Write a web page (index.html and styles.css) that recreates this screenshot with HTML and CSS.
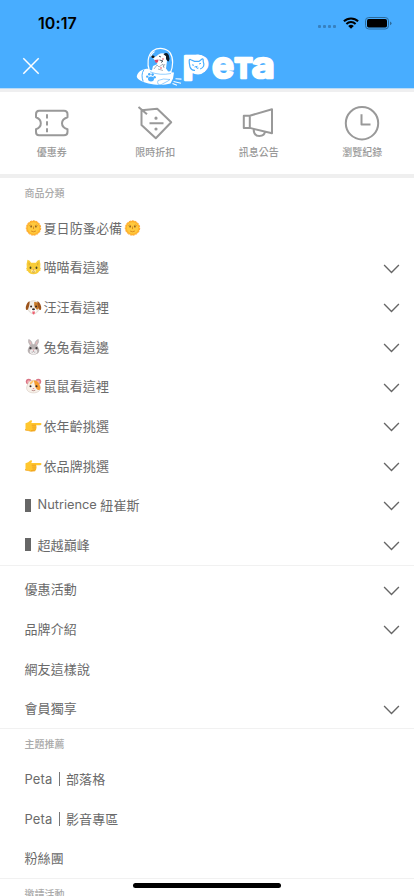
FILE: index.html
```html
<!DOCTYPE html>
<html lang="zh-Hant">
<head>
<meta charset="utf-8">
<meta name="viewport" content="width=device-width, initial-scale=1">
<title>Peta</title>
<link rel="stylesheet" href="styles.css">
</head>
<body>
<svg class="defs" width="0" height="0" aria-hidden="true">
  <symbol id="chevron" viewBox="0 0 16 10"><path d="M.6 1 8 8.5 15.4 1" fill="none" stroke="#666" stroke-width="1.35"/></symbol>
  <symbol id="sun" viewBox="0 0 16 16">
    <circle cx="8" cy="8" r="7.2" fill="#ffb52b" stroke="#ffa52d" stroke-width="1" stroke-dasharray="2 1"/>
    <circle cx="8" cy="8" r="5.7" fill="#ffc93e"/>
    <path d="M3.9 5.7q1.4-1.2 2.7 0M9.4 5.7q1.3-1.2 2.7 0" fill="none" stroke="#bf7417" stroke-width=".7"/>
    <circle cx="5.6" cy="6.8" r=".8" fill="#65401c"/><circle cx="10.4" cy="6.8" r=".8" fill="#65401c"/>
    <path d="M8 6.5v2.6M5.6 11q2.4 1.5 4.8 0" fill="none" stroke="#d27c16" stroke-width=".8"/>
  </symbol>
  <symbol id="cat" viewBox="0 0 16 16">
    <path d="M2 .8Q4.500 1.500 5.600 3.800h4.800Q11.500 1.500 14 .8q1.300 3.800.7 7.600l.8 1.700-.8.2.3 1.500-1.200.3Q12 15.300 8 15.300t-5.800-3.200L1 11.800l.3-1.500-.8-.2.8-1.700Q.7 4.600 2 .8z" fill="#f8cc38"/>
    <path d="M3 3l1.600 2-1.200 2zM13 3l-1.600 2 1.200 2z" fill="#e0ad2b"/>
    <ellipse cx="5" cy="8.800" rx=".9" ry="1.300" fill="#4c4823"/><ellipse cx="11" cy="8.800" rx=".9" ry="1.300" fill="#4c4823"/>
    <ellipse cx="8" cy="12" rx="2.700" ry="1.700" fill="#ffe98c"/><path d="M7 10.600h2L8 11.800z" fill="#c45c5d"/><path d="M6.600 12.800q1.400.8 2.800 0" fill="none" stroke="#96651c" stroke-width=".6"/>
  </symbol>
  <symbol id="dog" viewBox="0 0 16 16">
    <ellipse cx="8" cy="8.200" rx="5.800" ry="6.600" fill="#f1ede7" stroke="#cbbdb0" stroke-width=".4"/>
    <path d="M8.700 3q4-.5 4.800 3.700.3 3.600-2.100 4-3.100-1-2.700-7.700z" fill="#c77a28"/>
    <path d="M4.200 2.300Q1.800 2.600.4 7.400q-.6 3.700 1.500 3.600Q3.900 8.400 4.200 2.300zM11.800 2.300q2.400.3 3.800 5.100.6 3.700-1.500 3.600-2-2.600-2.300-8.700z" fill="#9c531b"/>
    <circle cx="5.600" cy="7.500" r="1" fill="#38271e"/><circle cx="10.600" cy="7.500" r="1" fill="#38271e"/>
    <ellipse cx="8" cy="11.300" rx="3" ry="2.300" fill="#fff"/><ellipse cx="8" cy="10.200" rx="1.500" ry="1" fill="#332c2b"/><path d="M6.700 12.600h2.800q-.1 2.800-1.400 2.800t-1.400-2.800z" fill="#ee5e70"/>
  </symbol>
  <symbol id="rabbit" viewBox="0 0 16 16">
    <path d="M5.200 7Q2 3.300 3.200.4 6.400 1.200 7 6.200M10.800 7Q14 3.300 12.800.4 9.600 1.200 9 6.200" fill="#c5bdbd" stroke="#aaa1a2" stroke-width=".5"/>
    <path d="M5.400 5.400Q4 3.700 4.100 2.100q1.400 1 1.800 3.300zM10.600 5.400Q12 3.700 11.900 2.100q-1.400 1-1.800 3.300z" fill="#f0b9bc"/>
    <path d="M8 5.200c4 0 4.500 2.400 5.800 5.700C14 14.500 10.500 15.500 8 15.500s-6-1-5.800-4.600C3.500 7.600 4 5.200 8 5.200z" fill="#b9b2b2"/>
    <circle cx="5" cy="9.200" r="1.100" fill="#413b3d"/><circle cx="11" cy="9.200" r="1.100" fill="#413b3d"/>
    <ellipse cx="8" cy="12.700" rx="3.700" ry="2.400" fill="#efecec"/><path d="M7 10.800h2l-1 1z" fill="#d76778"/><path d="M6.200 13q.9.8 1.800-.7.900 1.500 1.800.7" fill="none" stroke="#8a7e80" stroke-width=".6"/>
  </symbol>
  <symbol id="hamster" viewBox="0 0 16 16">
    <circle cx="3.200" cy="3.600" r="2.900" fill="#d97585"/><circle cx="12.800" cy="3.600" r="2.900" fill="#d97585"/><circle cx="3.300" cy="3.800" r="1.600" fill="#f6b0b6"/><circle cx="12.700" cy="3.800" r="1.600" fill="#f6b0b6"/>
    <path d="M8 2.300c4 0 5.800 2.300 6.800 6.700.8 4-3.200 5.900-6.800 5.900S.4 13 1.200 9C2.200 4.600 4 2.300 8 2.300z" fill="#f7f1e9" stroke="#cfbfb5" stroke-width=".5"/>
    <path d="M8.300 2.400c4 0 5.700 2.700 6.500 6.600.4 2.600-1.100 3.500-2.200 2.900C10 11 9.500 7.500 8.300 2.400z" fill="#f59b31"/><path d="M7 2.400Q4 4 4.200 6.500 7 6 8.300 2.400z" fill="#ffc265"/>
    <circle cx="5" cy="8.300" r="1" fill="#3a2924"/><circle cx="11" cy="8.300" r="1" fill="#3a2924"/><path d="M7 10.200h2l-1 1.100z" fill="#dd536b"/><path d="M6.200 12.200q1.800 1 3.600 0" fill="none" stroke="#a06361" stroke-width=".7"/>
  </symbol>
  <symbol id="hand" viewBox="0 0 17 16">
    <path d="M.5 5.300Q3.500 4.500 5.300 2.500q1.900-.5 1.700.8L6.300 4.900l9 .1q1.200.1 1.200 1.100t-1.200 1.200H11q1 .8.300 1.800.8 1-.2 1.900.4 1.200-.8 1.600Q5 14 3.100 12.500L.5 12.200z" fill="#ffc62d"/>
    <path d="M11 7.200H6.800M11.200 9.100H7.200M11 11H7.500M10.200 12.700H6" fill="none" stroke="#e89418" stroke-width=".7"/><path d="M.5 11v1.200l2.600.3q1.900 1.400 7.100.2" fill="none" stroke="#f2a51c" stroke-width=".7"/>
  </symbol>
</svg>

<div class="screen">
  <header class="top">
    <div class="status">
      <span class="time">10:17</span>
      <span class="signals">
        <span class="dots"><i></i><i></i><i></i><i></i></span>
        <svg class="wifi" viewBox="0 0 16 12"><path d="M.9 4.300a10.200 10.200 0 0 1 14.200 0M3.400 6.900a6.700 6.700 0 0 1 9.200 0" fill="none" stroke="#000" stroke-width="2"/><path d="M5.200 9a4.200 4.200 0 0 1 5.600 0L8 11.800z"/></svg>
        <svg class="battery" viewBox="0 0 27 13"><rect x=".5" y=".5" width="23" height="11.500" rx="3.300" fill="none" stroke="#2c6a9b" stroke-width="1"/><rect x="2" y="2" width="20" height="8.500" rx="1.700"/><path d="M25 4.400q1.500.5 1.500 1.900T25 8.200z" fill="#2c6a9b"/></svg>
      </span>
    </div>
    <div class="nav">
      <svg class="close" viewBox="0 0 18 18"><path d="M1.300 1.300l15.400 15.400M16.700 1.300L1.300 16.700" stroke="#fff" stroke-width="1.500"/></svg>
      <svg class="logo" viewBox="0 0 140 40" role="img" aria-label="Peta">
        <path d="M.8 29C2.500 23 9 20.800 16 22l13 3 9 .5-1 6-2.500 5C25 39 10 37.500 3.500 33 1.500 31.500.6 30.500.8 29z" fill="#fff"/>
        <path d="M7.800 22.800q-3.200 4.800-.6 11.700" fill="none" stroke="#48adff" stroke-width="1"/>
        <path d="M13.500 24C10.800 17.500 11.500 8 17 3.800c5.500-3.900 13.500-2.700 17 1.800 3.800 5.500 3 14.500.5 19.900z" fill="#48adff" stroke="#fff" stroke-width="1.200"/>
        <path d="M14.500 9.500q1-3.300 4-5" fill="none" stroke="#fff" stroke-width="1.300"/>
        <path d="M16.500 10.300q4-.3 6-2.800 4-2.500 7.500.3l1 6.200-1 7.500 2.500 3.500H15.500l1.500-6 4.500-2-2.500-3.200z" fill="#fff"/>
        <path d="M27.500 7.300q3.500-2.800 5.300 1 1.500 3.500-.2 6.300-3.100-1.100-2.600-5.300z" fill="#111c27"/>
        <ellipse cx="17" cy="9.700" rx="1.600" ry="1.200" fill="#111"/><path d="M23 9.200l2 .8M23.500 13l3.500 1-2 1.500" stroke="#253440" stroke-width=".8" fill="none"/><path d="M18.500 12.900l4-.5q-.3 3.800-2.800 3.300z" fill="#db4565"/><circle cx="27" cy="12" r="1" fill="#ee8c9b"/>
        <path d="M18 22l3-4 2 2 4-3 1 4M22 22l5 1.500M29 17l-2 3" stroke="#738291" stroke-width=".6" fill="none"/><circle cx="25" cy="21" r=".9" fill="#ef8790"/>
        <path d="M13 23.300q11 5 22.500 1.500" fill="none" stroke="#fff" stroke-width="1.500"/>
        <path d="M14 24.800q10 4 21 1.700" fill="none" stroke="#48adff" stroke-width=".6"/>
        <g fill="#48adff"><ellipse cx="15" cy="32" rx="3" ry="2.400"/><circle cx="11.200" cy="29.600" r="1.200"/><circle cx="13.300" cy="27.300" r="1.300"/><circle cx="16.600" cy="27.600" r="1.300"/><circle cx="18.600" cy="30.200" r="1.200"/></g>
        <path d="M22 33.500q5-2.500 12-1l-2 1.500-7 3.700q-4.500.5-3-4.200z" fill="#fff" stroke="#48adff" stroke-width=".6"/>
        <path d="M39.500 31.800l6 .3M37.500 34.500l7.500 1.800M36.500 36.500l4.500 1.800" stroke="#fff" stroke-width="1.100"/>
        <g class="wordmark">
          <text x="46.500" y="32.500" font-size="33" textLength="26" lengthAdjust="spacingAndGlyphs">P</text>
          <text x="76" y="31.300" font-size="37" textLength="22" lengthAdjust="spacingAndGlyphs">e</text>
          <text x="99" y="31.300" font-size="37" textLength="17" lengthAdjust="spacingAndGlyphs">т</text>
          <text x="115.800" y="31.300" font-size="37" textLength="23" lengthAdjust="spacingAndGlyphs">a</text>
        </g>
        <ellipse cx="62" cy="17.500" rx="9.800" ry="10" fill="#fff"/>
        <path d="M54 20q-2-9 .8-7.300l3.700 1.700h4.500L66 12q1.500-.8 1.200 2.500 2.300 5.500-3 7.500" fill="none" stroke="#48adff" stroke-width="1.200"/>
        <path d="M54 20q1.500 3.800 5 3.300" fill="none" stroke="#48adff" stroke-width="1.200"/>
        <path d="M56 17.800l2 .5M63 17l2-.7M58.500 20l3-.7M60.300 19.800q.3 2.500 2.200 1.200" fill="none" stroke="#48adff" stroke-width="1"/>
      </svg>
    </div>
  </header>

  <nav class="shortcuts">
    <a class="shortcut"><svg viewBox="0 0 36 36"><path d="M5 5.700h25q3.500 0 3.500 3.500v3q-5.500 1.800-5.500 6t5.500 6v2.700q0 3.300-3.500 3.300H5q-3 0-3-3.300v-2.700q4.800-1.800 4.800-6t-4.800-6v-3q0-3.500 3-3.500z"/><path d="M13 9.300v4.300M13 16.200v4.300M13 23.300v4" /></svg><span>優惠券</span></a>
    <a class="shortcut"><svg viewBox="0 0 36 36"><path d="M4.500 5.200l15.700-1.500 14 13.600-15.400 16L4.500 20zM1.500 2l8.500 7.300M12.500 18.300h14"/><path class="solid" d="M17.400 13.200a1.600 1.600 0 1 0 3.200 0 1.600 1.600 0 1 0-3.200 0M17.400 24a1.600 1.600 0 1 0 3.200 0 1.600 1.600 0 1 0-3.200 0"/></svg><span>限時折扣</span></a>
    <a class="shortcut"><svg viewBox="0 0 36 36"><path d="M2.800 10.700h6v12.200h-6zM8.800 10.700L31 4.300v24L8.800 22.900M12.600 24q.2 7 5.700 7t5.500-4.400"/></svg><span>訊息公告</span></a>
    <a class="shortcut"><svg viewBox="0 0 36 36"><circle cx="18" cy="18.200" r="16.200"/><path d="M17.500 9.300v10.200h9"/></svg><span>瀏覽紀錄</span></a>
  </nav>

  <main>
    <section>
      <h2>商品分類</h2>
      <ul>
        <li><span class="label"><svg class="emoji"><use href="#sun"/></svg>夏日防蚤必備<svg class="emoji after"><use href="#sun"/></svg></span></li>
        <li><span class="label"><svg class="emoji"><use href="#cat"/></svg>喵喵看這邊</span><svg class="chevron"><use href="#chevron"/></svg></li>
        <li><span class="label"><svg class="emoji"><use href="#dog"/></svg>汪汪看這裡</span><svg class="chevron"><use href="#chevron"/></svg></li>
        <li><span class="label"><svg class="emoji"><use href="#rabbit"/></svg>兔兔看這邊</span><svg class="chevron"><use href="#chevron"/></svg></li>
        <li><span class="label"><svg class="emoji"><use href="#hamster"/></svg>鼠鼠看這裡</span><svg class="chevron"><use href="#chevron"/></svg></li>
        <li><span class="label"><svg class="emoji"><use href="#hand"/></svg>依年齡挑選</span><svg class="chevron"><use href="#chevron"/></svg></li>
        <li><span class="label"><svg class="emoji"><use href="#hand"/></svg>依品牌挑選</span><svg class="chevron"><use href="#chevron"/></svg></li>
        <li><span class="label"><i class="block"></i><span class="latin">Nutrience</span>紐崔斯</span><svg class="chevron"><use href="#chevron"/></svg></li>
        <li><span class="label"><i class="block"></i>超越巔峰</span><svg class="chevron"><use href="#chevron"/></svg></li>
      </ul>
    </section>
    <section class="plain">
      <ul>
        <li><span class="label">優惠活動</span><svg class="chevron"><use href="#chevron"/></svg></li>
        <li><span class="label">品牌介紹</span><svg class="chevron"><use href="#chevron"/></svg></li>
        <li><span class="label">網友這樣說</span></li>
        <li><span class="label">會員獨享</span><svg class="chevron"><use href="#chevron"/></svg></li>
      </ul>
    </section>
    <section class="topics">
      <h2>主題推薦</h2>
      <ul>
        <li><span class="label"><span class="brand">Peta</span><i class="bar"></i>部落格</span></li>
        <li><span class="label"><span class="brand">Peta</span><i class="bar"></i>影音專區</span></li>
        <li><span class="label">粉絲團</span></li>
      </ul>
    </section>
    <section class="invite">
      <h2>邀請活動</h2>
    </section>
  </main>
  <div class="home-indicator"></div>
</div>
</body>
</html>
```
FILE: styles.css
```css
* { box-sizing: border-box; }
body {
  margin: 0;
  background: #fff;
  color: #6a6a6a;
  font-family: Inter, "Noto Sans CJK TC", sans-serif;
}
.defs { position: absolute; }
.screen {
  position: relative;
  width: 414px;
  height: 896px;
  overflow: hidden;
}
svg { display: block; flex: none; }

.top {
  height: 92px;
  background: #48adff;
  border-bottom: 3px solid #efeff0;
  box-shadow: inset 0 -1px #b9dcf8;
}
.status {
  height: 46px;
  padding: 0 22px 0 38px;
  display: flex;
  justify-content: space-between;
  align-items: center;
}
.time { font-size: 16px; font-weight: 600; color: #000; letter-spacing: .1px; }
.signals { display: flex; align-items: center; }
.dots { display: flex; gap: 2px; margin: 7px 7px 0 0; }
.dots i { width: 3px; height: 3px; border-radius: 1px; background: #3781bf; }
.wifi { width: 16px; height: 12px; margin-right: 6px; }
.battery { width: 27px; height: 13px; }
.nav { height: 40px; display: flex; align-items: flex-start; padding-left: 22px; }
.close { width: 18px; height: 18px; margin-top: 11px; }
.logo { width: 140px; height: 40px; margin: 1px 0 0 96px; overflow: visible; }
.wordmark {
  font-family: Inter, "Liberation Sans", sans-serif;
  font-weight: 600;
  fill: #fff;
  stroke: #fff;
  stroke-width: 2.700;
  stroke-linejoin: round;
}

.shortcuts {
  height: 86px;
  padding-top: 13px;
  display: grid;
  grid-template-columns: repeat(4, 1fr);
  border-bottom: 4px solid #efefef;
}
.shortcut {
  display: flex;
  flex-direction: column;
  align-items: center;
  gap: 3px;
  font-size: 10px;
  line-height: 16px;
  font-weight: 500;
  color: #999;
}
.shortcut svg {
  width: 36px;
  height: 36px;
  fill: none;
  stroke: #999;
  stroke-width: 2;
  stroke-linejoin: round;
}
.shortcut .solid { fill: #999; stroke: none; }

h2 {
  margin: 0;
  height: 30.200px;
  padding-left: 24.500px;
  font-size: 10px;
  line-height: 30px;
  font-weight: 500;
  color: #aaa;
}
ul { margin: 0; padding: 0; list-style: none; }
li {
  height: 39.640px;
  padding: 0 14px 0 24.500px;
  display: flex;
  align-items: center;
  justify-content: space-between;
}
.label {
  display: flex;
  align-items: center;
  font-size: 13px;
  line-height: 20px;
  letter-spacing: .1px;
  white-space: nowrap;
  margin-top: -.4px;
}
.emoji { width: 17px; height: 16px; margin-right: 2px; }
.emoji.after { margin: 0 0 0 1.500px; }
.chevron { width: 17px; height: 10px; margin-top: 2px; }
.block { width: 6.500px; height: 13px; margin-right: 6.500px; background: #666; }
.latin { font-size: 12.800px; margin-right: 3.500px; letter-spacing: 0; }
.brand { width: 34px; }
.bar { width: 1px; height: 14px; margin-right: 6.500px; background: #777; }
.plain { border-top: 1px solid #f1f1f1; padding-top: 4px; }
.topics, .invite { border-top: 1px solid #f1f1f1; }

.home-indicator {
  position: absolute;
  left: 133px;
  top: 882.500px;
  width: 148px;
  height: 5px;
  border-radius: 3px;
  background: #000;
}
```
